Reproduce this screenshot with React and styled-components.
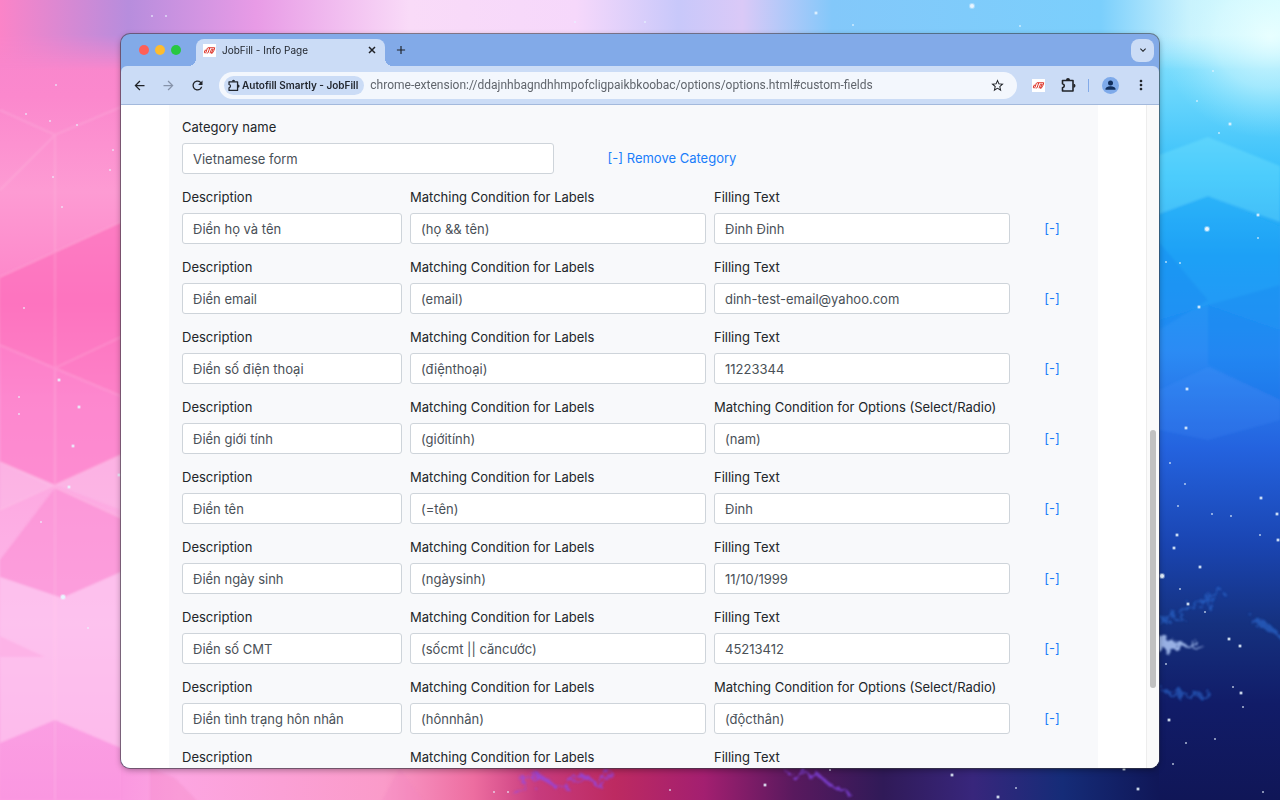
import React from 'react';
import styled, { createGlobalStyle } from 'styled-components';
import { MdAdd, MdArrowBack, MdArrowForward, MdExpandMore, MdMoreVert, MdRefresh, MdStarBorder } from 'react-icons/md';

const GlobalStyle = createGlobalStyle`
  * {
    box-sizing: border-box;
  }

  body {
    margin: 0;
    font-family: Inter, "Liberation Sans", sans-serif;
  }
`;

const Desktop = styled.div`
  position: relative;
  display: flex;
  height: 100vh;
  padding: 34px 121px 32px;
  overflow: hidden;
`;

const WallpaperArt = styled.svg`
  position: absolute;
  inset: 0;
  width: 100%;
  height: 100%;
`;

const BrowserWindow = styled.div`
  position: relative;
  display: flex;
  flex: 1;
  flex-direction: column;
  min-width: 0;
  overflow: hidden;
  background: #82aae8;
  border-radius: 9px;
  box-shadow: 0 0 0 1px rgba(60, 60, 70, 0.6), 0 2px 6px rgba(0, 0, 0, 0.35);
`;

const TabStrip = styled.div`
  display: flex;
  flex: none;
  align-items: center;
  height: 32px;
  padding: 0 5px 0 18px;
`;

const TrafficLights = styled.div`
  display: flex;
  gap: 6px;
  margin-right: 15px;
`;

const Light = styled.button`
  width: 10px;
  height: 10px;
  padding: 0;
  border: 0;
  border-radius: 50%;
  background: ${props => props.$color};
`;

const Tab = styled.div`
  position: relative;
  display: flex;
  align-self: flex-end;
  align-items: center;
  gap: 6px;
  width: 189px;
  height: 27px;
  padding: 0 6px 5px 7px;
  background: #cbdcf6;
  border-radius: 8px 8px 0 0;

  /* Flared bottom corners */
  &::before,
  &::after {
    content: "";
    position: absolute;
    bottom: 0;
    width: 8px;
    height: 8px;
  }

  &::before {
    right: 100%;
    background: radial-gradient(circle at 0 0, transparent 8px, #cbdcf6 8px);
  }

  &::after {
    left: 100%;
    background: radial-gradient(circle at 100% 0, transparent 8px, #cbdcf6 8px);
  }
`;

const TabTitle = styled.span`
  flex: 1;
  font-size: 10px;
  line-height: 14px;
  color: #22272f;
  white-space: nowrap;
`;

const IconButton = styled.button`
  display: flex;
  flex: none;
  align-items: center;
  justify-content: center;
  width: ${props => props.$size || 16}px;
  height: ${props => props.$size || 16}px;
  padding: 0;
  border: 0;
  background: none;
  color: ${props => (props.$muted ? '#8693aa' : '#202328')};
`;

const NewTabButton = styled(IconButton)`
  margin-left: 8px;
`;

const TabSearchButton = styled(IconButton)`
  margin-left: auto;
  background: #cbdcf6;
  border-radius: 8px;
`;

const Toolbar = styled.div`
  display: flex;
  flex: none;
  align-items: center;
  height: 39px;
  padding: 0 10px;
  background: #cbdcf6;
  border-bottom: 1px solid #a3b9dc;
  border-radius: 6px 6px 0 0;
`;

const NavButtons = styled.div`
  display: flex;
  gap: 13px;
  margin-right: 14px;
`;

const AddressBar = styled.div`
  display: flex;
  flex: 1;
  align-items: center;
  gap: 6px;
  height: 27px;
  min-width: 0;
  padding: 0 12px 0 5px;
  background: #f3f7fd;
  border-radius: 14px;
`;

const SiteChip = styled.button`
  display: flex;
  flex: none;
  align-items: center;
  gap: 2px;
  height: 19px;
  padding: 0 6px 0 3px;
  border: 0;
  border-radius: 10px;
  background: #cbdcf6;
  color: #22272f;
  font-family: inherit;
  font-size: 10px;
  font-weight: 600;
  line-height: 14px;
  white-space: nowrap;
`;

const UrlInput = styled.input`
  flex: 1;
  min-width: 0;
  padding: 0;
  border: 0;
  outline: none;
  background: transparent;
  color: #60656c;
  font-family: Roboto, "Liberation Sans", sans-serif;
  font-size: 12px;
  line-height: 16px;
`;

const Actions = styled.div`
  display: flex;
  align-items: center;
  gap: 14px;
  margin-left: 13px;
`;

const Separator = styled.span`
  width: 1px;
  height: 13px;
  margin: 0 -1px 0 -2px;
  background: #82aae8;
`;

const Page = styled.div`
  display: flex;
  flex: 1;
  min-height: 0;
  background: #fff;
`;

const PageContent = styled.main`
  flex: 1;
  min-width: 0;
  padding: 0 48px;
  overflow: hidden;
`;

const Panel = styled.form`
  display: flex;
  flex-direction: column;
  gap: 13px;
  padding: 12px 12px 12px 13px;
  background: #f8f9fb;
`;

const Row = styled.div`
  display: grid;
  grid-template-columns: repeat(12, minmax(0, 1fr));
  column-gap: 8px;
  align-items: end;
`;

const Field = styled.label`
  display: flex;
  flex-direction: column;
  gap: 5px;
  grid-column: span ${props => props.$span};
  color: #212529;
  font-size: 13px;
  line-height: 21px;
  white-space: nowrap;
`;

const TextInput = styled.input`
  width: 100%;
  height: 31px;
  padding: 0 10px;
  border: 1px solid #ced4da;
  border-radius: 3px;
  background: #fff;
  color: #495057;
  font-family: inherit;
  font-size: 13px;
  line-height: 20px;
`;

const RemoveLink = styled.a`
  grid-column: span ${props => props.$span};
  color: #1a7dfa;
  font-size: 13px;
  line-height: 31px;
  text-align: center;
  text-decoration: none;
  white-space: nowrap;
`;

const ScrollTrack = styled.div`
  display: grid;
  flex: none;
  grid-template-rows: 49fr 39fr 12fr;
  width: 13px;
  padding: 0 3px;
  background: #fafafa;
  border-left: 1px solid #ededed;
`;

const ScrollThumb = styled.div`
  grid-row: 2;
  width: 6px;
  background: #c1c1c1;
  border-radius: 3px;
`;

const rows = [
  { description: 'Điền họ và tên', condition: '(họ && tên)', value: 'Đinh Đinh' },
  { description: 'Điền email', condition: '(email)', value: 'dinh-test-email@yahoo.com' },
  { description: 'Điền số điện thoại', condition: '(điệnthoại)', value: '11223344' },
  { description: 'Điền giới tính', condition: '(giớitính)', value: '(nam)', options: true },
  { description: 'Điền tên', condition: '(=tên)', value: 'Đinh' },
  { description: 'Điền ngày sinh', condition: '(ngàysinh)', value: '11/10/1999' },
  { description: 'Điền số CMT', condition: '(sốcmt || căncước)', value: '45213412' },
  { description: 'Điền tình trạng hôn nhân', condition: '(hônnhân)', value: '(độcthân)', options: true },
  { description: '', condition: '', value: '' },
];

// x, y, radius
const stars = [
  [56, 85, 1], [26, 114, 1], [77, 125, 1], [50, 121, 1], [53, 177, 1], [62, 207, 1], [24, 308, 1],
  [59, 380, 2], [79, 407, 2], [73, 446, 2], [19, 397, 1], [19, 414, 1], [69, 487, 2], [41, 522, 1],
  [63, 597, 3], [88, 628, 1], [110, 170, 1], [113, 150, 1], [119, 475, 2], [152, 16, 1], [166, 16, 1],
  [816, 13, 2], [972, 6, 3], [575, 22, 1], [645, 22, 1], [853, 25, 1], [1020, 26, 1],
  [1213, 71, 1], [1197, 101, 1], [1230, 124, 2], [1219, 133, 1], [1207, 229, 3], [1258, 215, 2],
  [1258, 238, 1], [1166, 262, 1], [1180, 263, 1], [1199, 307, 2], [1187, 389, 2], [1186, 428, 2],
  [1170, 463, 1], [1185, 484, 1], [1261, 498, 2], [1178, 506, 1], [1212, 514, 1], [1231, 516, 1],
  [1277, 514, 2], [1278, 540, 2], [1260, 535, 1], [1177, 535, 2], [1174, 548, 2], [1162, 576, 3],
  [1200, 567, 2], [1180, 589, 1], [1188, 604, 2], [1205, 612, 1], [1229, 639, 2], [1240, 646, 2],
  [1166, 664, 1], [1233, 687, 1], [1241, 693, 2], [1243, 707, 1], [1169, 720, 2], [1186, 743, 1],
  [1215, 739, 1], [1173, 764, 1], [1263, 792, 1], [765, 785, 2], [670, 790, 1], [830, 770, 1],
  [952, 775, 2], [998, 797, 2], [1016, 788, 1], [1124, 769, 2], [1138, 789, 2], [508, 792, 1], [494, 792, 1],
];

const Wallpaper = () => (
  <WallpaperArt viewBox="0 0 1280 800" preserveAspectRatio="none" aria-hidden="true">
    <defs>
      <linearGradient id="leftSky" x1="0" y1="0" x2="0" y2="1">
        <stop offset="0" stopColor="#f585cc" />
        <stop offset="0.12" stopColor="#fb88cd" />
        <stop offset="0.24" stopColor="#fd9bd3" />
        <stop offset="0.38" stopColor="#fd83c8" />
        <stop offset="0.5" stopColor="#fd9fdb" />
        <stop offset="0.78" stopColor="#fdb9eb" />
        <stop offset="1" stopColor="#fb9ce2" />
      </linearGradient>
      <linearGradient id="topSky">
        <stop offset="0" stopColor="#fb84c8" />
        <stop offset="0.1" stopColor="#b78ddd" />
        <stop offset="0.2" stopColor="#e89be6" />
        <stop offset="0.32" stopColor="#f9dbf8" />
        <stop offset="0.45" stopColor="#f6d8fb" />
        <stop offset="0.53" stopColor="#c8c8fa" />
        <stop offset="0.58" stopColor="#dac9f7" />
        <stop offset="0.65" stopColor="#83c8fa" />
        <stop offset="0.86" stopColor="#7bcffc" />
        <stop offset="0.93" stopColor="#cdf3fd" />
        <stop offset="1" stopColor="#d9ffff" />
      </linearGradient>
      <linearGradient id="bottomSky">
        <stop offset="0.095" stopColor="#fa98e0" />
        <stop offset="0.14" stopColor="#fca5e1" />
        <stop offset="0.3" stopColor="#fa9bc9" />
        <stop offset="0.37" stopColor="#ed6da0" />
        <stop offset="0.42" stopColor="#c73b7d" />
        <stop offset="0.48" stopColor="#bd2a61" />
        <stop offset="0.55" stopColor="#a31f70" />
        <stop offset="0.62" stopColor="#59195e" />
        <stop offset="0.69" stopColor="#301a58" />
        <stop offset="0.76" stopColor="#38267c" />
        <stop offset="0.83" stopColor="#152c78" />
        <stop offset="0.905" stopColor="#101758" />
      </linearGradient>
      <linearGradient id="rightSky" x1="0" y1="0" x2="0" y2="1">
        <stop offset="0" stopColor="#a5ecff" />
        <stop offset="0.12" stopColor="#67d5fc" />
        <stop offset="0.22" stopColor="#37bffa" />
        <stop offset="0.32" stopColor="#1c9cf4" />
        <stop offset="0.44" stopColor="#2b8bf4" />
        <stop offset="0.56" stopColor="#2463df" />
        <stop offset="0.68" stopColor="#1a45b2" />
        <stop offset="0.78" stopColor="#15317f" />
        <stop offset="0.88" stopColor="#111c68" />
        <stop offset="1" stopColor="#101657" />
      </linearGradient>
      <linearGradient id="topFade" x1="0" y1="0" x2="0" y2="1">
        <stop offset="0" stopColor="#fff" />
        <stop offset="0.5" stopColor="#fff" />
        <stop offset="1" stopColor="#000" />
      </linearGradient>
      <mask id="topMask">
        <rect width="1280" height="70" fill="url(#topFade)" />
      </mask>
      <clipPath id="bottomClip">
        <rect x="121" y="760" width="1038" height="40" />
      </clipPath>
      <radialGradient id="glow">
        <stop offset="0" stopColor="#edffff" stopOpacity="0.8" />
        <stop offset="0.5" stopColor="#d8faff" stopOpacity="0.5" />
        <stop offset="1" stopColor="#a5ecff" stopOpacity="0" />
      </radialGradient>
      <filter id="soften" x="-10%" y="-10%" width="120%" height="120%">
        <feGaussianBlur stdDeviation="1" />
      </filter>
      <filter id="nebula" x="-20%" y="-50%" width="140%" height="200%">
        <feTurbulence type="fractalNoise" baseFrequency="0.12" numOctaves="4" seed="4" />
        <feDisplacementMap in="SourceGraphic" scale="22" />
        <feGaussianBlur stdDeviation="1" />
      </filter>
    </defs>

    <rect width="640" height="800" fill="url(#leftSky)" />
    <rect x="640" width="640" height="800" fill="url(#rightSky)" />
    <rect y="766" width="1280" height="34" fill="url(#bottomSky)" clipPath="url(#bottomClip)" />
    <rect width="1280" height="70" fill="url(#topSky)" mask="url(#topMask)" />
    <ellipse cx="1270" cy="38" rx="110" ry="100" fill="url(#glow)" />

    {/* Pink facets */}
    <g filter="url(#soften)">
      <path d="M0 277L121 222V396L55 368 0 345Z" fill="#fd62b6" opacity="0.5" />
      <path d="M55 368L121 396V455L55 485 0 462V345Z" fill="#fd6bbf" opacity="0.45" />
      <path d="M0 462L55 485 0 510ZM55 485L121 455V510Z" fill="#fbc2e8" opacity="0.45" />
      <path d="M55 488L121 518V572L62 598 0 577V560Z" fill="#fb86cf" opacity="0.5" />
      <path d="M0 577L62 598 121 572V748L55 720 0 743Z" fill="#fdc6ef" opacity="0.65" />
      <path d="M0 636L45 657H0Z" fill="#fb9bdd" opacity="0.35" />
      <path d="M0 743L55 720 121 748V800H0Z" fill="#f98bdc" opacity="0.35" />
      <path
        d="M0 110L55 135 121 107M0 190L55 135M0 277L121 222M0 345L121 396M55 368L121 337M0 510L121 455M0 462L121 518M55 135V800"
        fill="none"
        stroke="#ffd2eb"
        strokeWidth="2"
        opacity="0.2"
      />
      <path d="M380 804L400 768 425 804ZM150 804V768L175 778 200 804Z" fill="#f285bf" opacity="0.3" />
    </g>

    {/* Blue facets */}
    <g filter="url(#soften)">
      <path d="M1159 155L1208 137 1280 166V222L1208 196 1159 214Z" fill="#7eeaff" opacity="0.3" />
      <path d="M1159 214L1208 196 1280 226V330L1208 305 1159 320Z" fill="#13a9f8" opacity="0.3" />
      <path d="M1159 242L1208 300 1159 330ZM1208 305L1280 285V400L1208 365Z" fill="#147bed" opacity="0.22" />
      <path d="M1159 390L1208 367 1280 400V420L1208 440 1159 430Z" fill="#4b9cff" opacity="0.15" />
    </g>

    <g filter="url(#nebula)" fill="none">
      <path d="M1155 638L1204 646 1155 650Z" fill="#b9d2ff" opacity="0.8" />
      <path d="M1159 622Q1195 610 1222 590M1250 620Q1270 625 1282 638M1160 688Q1180 700 1210 692" stroke="#3279e8" strokeWidth="4" opacity="0.5" />
      <path d="M515 795L535 772 560 790 580 774 600 785 610 770M790 776L815 772 830 785 850 794" stroke="#8a49f3" strokeWidth="3" opacity="0.7" />
    </g>
    {stars.map(([x, y, r]) => (
      <g key={`${x}-${y}`} fill="#e9f5ff">
        <circle cx={x} cy={y} r={r} opacity="0.4" />
        <circle cx={x} cy={y} r={r > 1 ? r - 1 : 0.7} />
      </g>
    ))}
  </WallpaperArt>
);

const JobFillLogo = () => (
  <svg width="13" height="13" viewBox="0 0 26 26" aria-hidden="true">
    <path d="M0 0h26v26H0z" fill="#fff" />
    <path
      d="M9 7.500L6 16.500q-.5 1.500-2 1.500t-1.200-2l1-3M13.500 7.500l-3 9q-.8 2-3 2M10 7.500h13.500l-1.500 5-3.500 6h-2l4-8h-3.500l-3 8M3.500 12.500h3"
      fill="none"
      stroke="#dd3329"
      strokeWidth="2"
      strokeLinejoin="round"
    />
  </svg>
);

const CloseIcon = () => (
  <svg width="8" height="8" viewBox="0 0 8 8" aria-hidden="true">
    <path d="M1 1l6 6M7 1L1 7" fill="none" stroke="currentColor" strokeWidth="1.500" />
  </svg>
);

const PuzzleIcon = ({ size }) => (
  <svg width={size} height={size} viewBox="0 0 16 16" aria-hidden="true">
    <path
      d="M2.500 3.500h10.500v10.500H2.500v-3.200c2.400-.5 2.400-3.600 0-4.100z"
      fill="none"
      stroke="currentColor"
      strokeWidth="1.600"
      strokeLinejoin="round"
    />
    <path d="M6 3a2 2 0 0 1 4 0zM13.500 6.700a2 2 0 0 1 0 4z" fill="currentColor" />
  </svg>
);

const ProfileIcon = () => (
  <svg width="17" height="17" viewBox="0 0 17 17" aria-hidden="true">
    <circle cx="8.5" cy="8.5" r="8.5" fill="#7eaaea" />
    <circle cx="8.5" cy="6" r="2.500" fill="#122f5c" />
    <path d="M3.500 12.800v-.8c0-1.900 3.300-2.700 5-2.700s5 .8 5 2.700v.8z" fill="#122f5c" />
  </svg>
);

const CustomFieldRow = ({ description, condition, value, options }) => (
  <Row>
    <Field $span={3}>
      Description
      <TextInput type="text" defaultValue={description} />
    </Field>
    <Field $span={4}>
      Matching Condition for Labels
      <TextInput type="text" defaultValue={condition} />
    </Field>
    <Field $span={4}>
      {options ? 'Matching Condition for Options (Select/Radio)' : 'Filling Text'}
      <TextInput type="text" defaultValue={value} />
    </Field>
    {description && <RemoveLink href="#custom-fields" $span={1}>[-]</RemoveLink>}
  </Row>
);

const App = () => {
  return (
    <Desktop>
      <GlobalStyle />
      <Wallpaper />
      <BrowserWindow>
        <TabStrip>
          <TrafficLights>
            <Light $color="#ff5f57" aria-label="Close window" />
            <Light $color="#febc2e" aria-label="Minimize window" />
            <Light $color="#28c840" aria-label="Zoom window" />
          </TrafficLights>
          <Tab>
            <JobFillLogo />
            <TabTitle>JobFill - Info Page</TabTitle>
            <IconButton $size={14} aria-label="Close tab"><CloseIcon /></IconButton>
          </Tab>
          <NewTabButton aria-label="New tab"><MdAdd size={14} /></NewTabButton>
          <TabSearchButton $size={23} aria-label="Search tabs"><MdExpandMore size={12} /></TabSearchButton>
        </TabStrip>

        <Toolbar>
          <NavButtons>
            <IconButton aria-label="Back"><MdArrowBack size={15} /></IconButton>
            <IconButton $muted aria-label="Forward"><MdArrowForward size={15} /></IconButton>
            <IconButton aria-label="Reload"><MdRefresh size={15} /></IconButton>
          </NavButtons>
          <AddressBar>
            <SiteChip>
              <PuzzleIcon size={13} />
              Autofill Smartly - JobFill
            </SiteChip>
            <UrlInput
              type="text"
              aria-label="Address"
              defaultValue="chrome-extension://ddajnhbagndhhmpofcligpaikbkoobac/options/options.html#custom-fields"
            />
            <IconButton aria-label="Bookmark this page"><MdStarBorder size={15} /></IconButton>
          </AddressBar>
          <Actions>
            <IconButton aria-label="JobFill"><JobFillLogo /></IconButton>
            <IconButton aria-label="Extensions"><PuzzleIcon size={16} /></IconButton>
            <Separator />
            <IconButton $size={17} aria-label="Profile"><ProfileIcon /></IconButton>
            <IconButton aria-label="Menu"><MdMoreVert size={16} /></IconButton>
          </Actions>
        </Toolbar>

        <Page>
          <PageContent>
            <Panel>
              <Row>
                <Field $span={5}>
                  Category name
                  <TextInput type="text" defaultValue="Vietnamese form" />
                </Field>
                <RemoveLink href="#custom-fields" $span={3}>[-] Remove Category</RemoveLink>
              </Row>
              {rows.map((row, index) => (
                <CustomFieldRow key={index} {...row} />
              ))}
            </Panel>
          </PageContent>
          <ScrollTrack>
            <ScrollThumb />
          </ScrollTrack>
        </Page>
      </BrowserWindow>
    </Desktop>
  );
};

export default App;
